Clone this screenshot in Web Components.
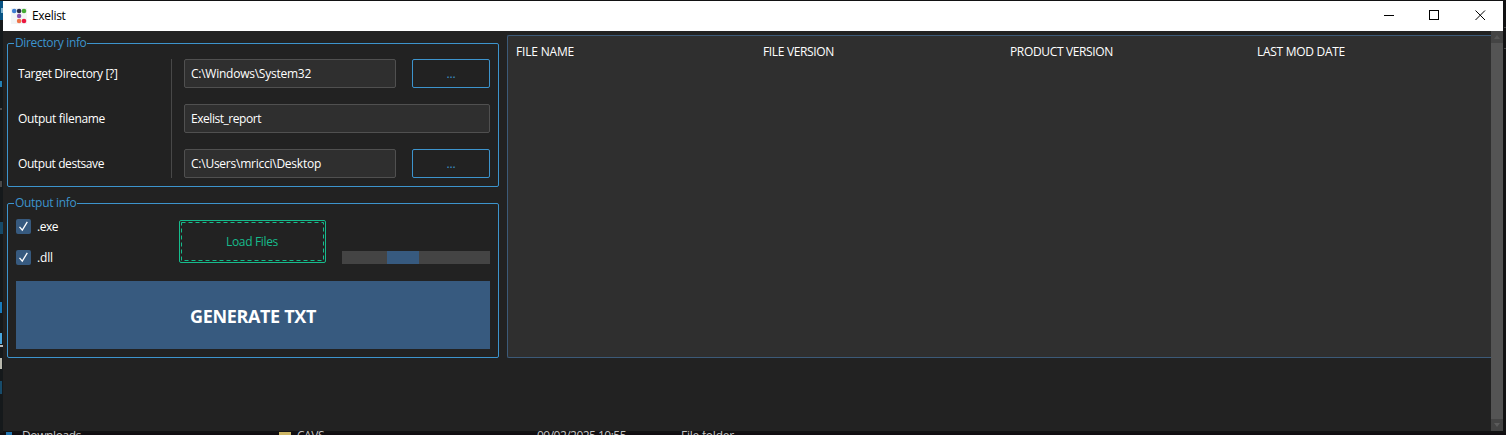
<!DOCTYPE html>
<html lang="en">
<head>
<meta charset="utf-8">
<title>Exelist</title>
<style>
html,body{margin:0;width:1506px;height:435px;overflow:hidden;background:#111}
body{font:12px/16px "Open Sans","Noto Sans",sans-serif;color:#fff}
</style>
</head>
<body>
<exe-desktop>
<exe-window>
  <title-bar slot="bar"></title-bar>
  <info-group slot="dir" label="Directory info" fit="71.5" style="height:144px"><directory-form></directory-form></info-group>
  <info-group slot="out" label="Output info" fit="61.5" style="height:155px"><output-form></output-form></info-group>
  <file-table slot="table"></file-table>
</exe-window>
</exe-desktop>
<script>
const define = (name, html, setup) => customElements.define(name, class extends HTMLElement {
  connectedCallback() {
    if (this.shadowRoot) return;
    const t = document.createElement('template');
    t.innerHTML = html;
    this.attachShadow({mode: 'open'}).append(t.content.cloneNode(true));
    if (setup) setup(this, this.shadowRoot);
  }
});

// Single-line text whose tracking is adjusted to a given width.
define('fit-text', `<style>:host{display:inline-block;white-space:pre}span{display:inline-block}</style><span><slot></slot></span>`, (el, root) => {
  const w = parseFloat(el.getAttribute('w'));
  const s = root.querySelector('span');
  const n = el.textContent.length;
  const natural = s.getBoundingClientRect().width;
  if (w && n) { s.style.letterSpacing = ((w - natural) / n) + 'px'; }
});

define('exe-desktop', `<style>
:host{display:block;position:relative;width:1506px;height:435px;overflow:hidden;background:#121213}
svg{position:absolute;inset:0}
.row{position:absolute;top:428px;left:0;color:#c4c4c4}
.row fit-text{position:absolute;top:0}
</style>
<svg width="1506" height="435">
<rect width="3" height="435" fill="#15191b"/>
<rect y="1" width="3" height="19" fill="#075384"/><rect x="1" y="8" width="2" height="5" fill="#7eb2cf"/>
<rect y="81" width="2" height="6" fill="#2380b5"/><rect y="108" width="2" height="2" fill="#4b4b4b"/>
<rect y="181" width="2" height="6" fill="#484848"/><rect y="222" width="3" height="12" fill="#164a69"/>
<rect y="302" width="2" height="11" fill="#177bbd"/><rect y="333" width="2" height="11" fill="#48a6df"/><rect y="345" width="3" height="2" fill="#bbb"/>
<rect y="358" width="2" height="11" fill="#b9b9ae"/><rect y="381" width="2" height="13" fill="#174b6a"/>
<rect y="433" width="1506" height="2" fill="#110d11"/>
<rect x="6" y="432" width="6" height="3" fill="#2475af"/><rect x="279" y="432" width="12" height="3" fill="#cdb665"/>
<path d="M1504 27.5h2M1504 48.5h2" stroke="#444"/>
</svg>
<div class="row"><fit-text w="59" style="left:22px">Downloads</fit-text><fit-text w="27" style="left:297px">CAVS</fit-text><fit-text w="89" style="left:537px">09/02/2025 10:55</fit-text><fit-text w="53" style="left:681px">File folder</fit-text></div>
<slot></slot>`);

define('exe-window', `<style>
:host{display:flex;flex-direction:column;position:relative;box-sizing:border-box;width:1500px;height:431px;margin-left:3px;padding-top:1px}
.body{display:flex;flex:1;background:#222}
.left{width:492px;padding:12px 8px 0 4px;display:flex;flex-direction:column;gap:16px}
.table{flex:1;padding-top:4px}
</style>
<slot name="bar"></slot>
<div class="body"><div class="left"><slot name="dir"></slot><slot name="out"></slot></div><div class="table"><slot name="table"></slot></div><scroll-bar></scroll-bar></div>`);

define('title-bar', `<style>
:host{display:flex;align-items:center;height:30px;background:#fff;color:#000;box-sizing:border-box;padding-left:8px}
fit-text{margin-left:5px;flex:1}
.i{margin-top:-1px}
.c{display:block;width:106px;height:12px;margin:-2px 16px 0 0}
</style>
<svg class="i" width="16" height="16" viewBox="0 0 16 16"><rect width="16" height="16" fill="#f3f5f6"/>
<circle cx="3.2" cy="3" r="2.3" fill="#3f7fd2"/><circle cx="8.1" cy="3" r="2.3" fill="#282b48"/><circle cx="13" cy="3" r="2.3" fill="#47ac35"/>
<circle cx="8.1" cy="8" r="2.2" fill="#8752ad"/><circle cx="8.1" cy="13" r="2.3" fill="#ef7348"/><circle cx="13" cy="13" r="2.3" fill="#ec1740"/></svg>
<fit-text w="33.5">Exelist</fit-text>
<svg class="c" viewBox="0 0 106 12"><g fill="none" stroke="#000"><path d="M3 6.5h10"/><rect x="48.5" y="1.5" width="9" height="9"/><path d="M94.5 1.5l9.5 9.5M104 1.5L94.5 11"/></g></svg>`);

define('info-group', `<style>
:host{display:block;position:relative;box-sizing:border-box;border:1px solid #3d94cd;border-radius:2px}
.l{position:absolute;left:6px;top:-9px;padding:0 0 0 1px;background:#222;color:#3d94cd;height:16px}
</style><span class="l"></span><slot></slot>`, (el, root) => {
  root.querySelector('.l').innerHTML = `<fit-text w="${el.getAttribute('fit')}">${el.getAttribute('label')}</fit-text>`;
});

define('text-field', `<style>
:host{display:flex;align-items:center;box-sizing:border-box;height:29px;padding-left:6px;background:#2f2f2f;border:1px solid #505050;border-radius:2px}
</style><slot></slot>`);

define('outline-button', `<style>
:host{display:flex;align-items:center;justify-content:center;box-sizing:border-box;height:29px;border:1px solid #3d94cd;border-radius:2px;color:#3d94cd}
</style><slot></slot>`);

define('directory-form', `<style>
:host{display:flex;padding:15px 8px 0 10px}
.labels{width:153px;height:119px;border-right:1px solid #484848;display:grid;grid-template-rows:29px 28px 29px;row-gap:16.5px;align-items:center}
.fields{flex:1;margin-left:12px;display:grid;grid-template-columns:212px 78px;gap:16px;grid-template-rows:29px 29px 29px;column-gap:16px}
.wide{grid-column:1/3}
</style>
<div class="labels"><fit-text w="99.5">Target Directory [?]</fit-text><fit-text w="87">Output filename</fit-text><fit-text w="86">Output destsave</fit-text></div>
<div class="fields">
<text-field><fit-text w="120">C:\\Windows\\System32</fit-text></text-field><outline-button><fit-text w="9">...</fit-text></outline-button>
<text-field class="wide"><fit-text w="70">Exelist_report</fit-text></text-field>
<text-field><fit-text w="130">C:\\Users\\mricci\\Desktop</fit-text></text-field><outline-button><fit-text w="9">...</fit-text></outline-button>
</div>`);

define('check-box', `<style>
:host{display:flex;align-items:flex-start;height:16px;gap:6px}
svg{display:block}
</style><svg width="15" height="15"><rect width="15" height="15" rx="2" fill="#375a7f"/><path d="M3.5 7.8l2.8 3.4L11.3 2.8" fill="none" stroke="#fff" stroke-width="1.3"/></svg><slot></slot>`);

define('load-button', `<style>
:host{display:flex;box-sizing:border-box;width:147px;height:43px;border:1px solid #16bc8c;border-radius:2px;color:#16bc8c;align-items:center;justify-content:center;position:relative}
svg{position:absolute;left:0;top:0}
fit-text{margin-right:1px}
</style><svg width="145" height="41"><rect x="1.5" y="1.5" width="142" height="38" fill="none" stroke="#16bc8c" stroke-dasharray="4 3"/></svg><fit-text w="52">Load Files</fit-text>`);

define('progress-strip', `<style>
:host{display:block;width:148px;height:13px;background:#444}
div{width:32px;height:13px;margin-left:45px;background:#375a7f}
</style><div></div>`);

define('output-form', `<style>
:host{display:block;padding:15px 8px 0}
.top{display:flex;height:62px}
.checks{width:163px;display:flex;flex-direction:column;gap:15px}
load-button{margin-top:1px}
progress-strip{margin:32px 0 0 16px}
.gen{display:flex;align-items:center;justify-content:center;box-sizing:border-box;height:68px;padding-top:1px;background:#375a7f;font-weight:700;font-size:18px;line-height:24px}
</style>
<div class="top"><div class="checks"><check-box><fit-text w="21">.exe</fit-text></check-box><check-box><fit-text w="16">.dll</fit-text></check-box></div><load-button></load-button><progress-strip></progress-strip></div>
<div class="gen"><fit-text w="126">GENERATE TXT</fit-text></div>`);

define('file-table', `<style>
:host{display:grid;grid-template-columns:repeat(4,247px);align-items:start;box-sizing:border-box;height:323px;width:984px;overflow:hidden;padding:8px 0 0 8px;border:1px solid #3c5a78;border-right:0;background:#2f2f2f;border-radius:2px 0 0 2px}
</style><div><fit-text w="58">FILE NAME</fit-text></div><div><fit-text w="71">FILE VERSION</fit-text></div><div><fit-text w="103">PRODUCT VERSION</fit-text></div><div><fit-text w="88">LAST MOD DATE</fit-text></div>`);

define('scroll-bar', `<style>
:host{display:flex;flex-direction:column;justify-content:space-between;width:12px;height:400px;background:#545454}
div{height:12px;background:#444;display:flex;align-items:center;justify-content:center}
</style><div><svg width="6" height="4"><path d="M0 4L3 0 6 4z" fill="#555"/></svg></div><div><svg width="6" height="4"><path d="M0 0L3 4 6 0z" fill="#5c5c5c"/></svg></div>`);
</script>
</body>
</html>
